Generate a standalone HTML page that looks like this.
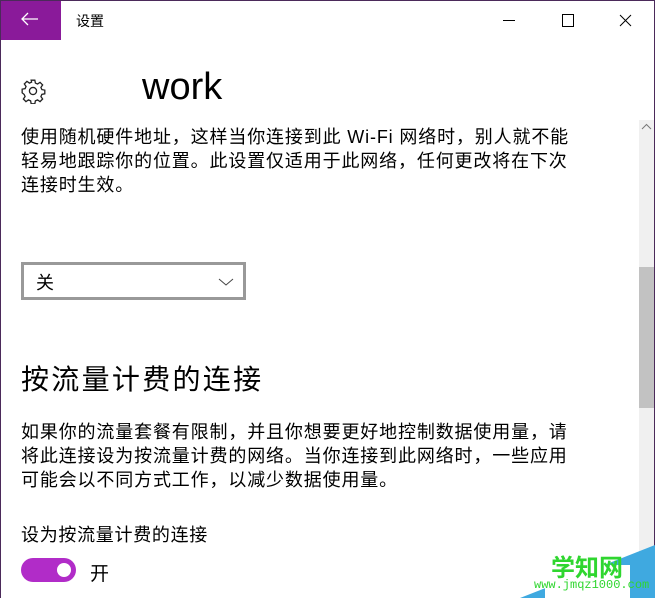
<!DOCTYPE html>
<html><head><meta charset="utf-8"><style>
body{margin:0;width:655px;height:598px;overflow:hidden;background:#fff;font-family:"Liberation Sans","Noto Sans CJK SC",sans-serif;color:#000;position:relative}
.win{position:absolute;left:0;top:0;width:653px;height:597px;border:1px solid #4b2a5a;border-bottom:none}
.abs{position:absolute;white-space:nowrap}
.p{font-size:18px;line-height:24px;letter-spacing:0.85px}
</style></head><body>
<div class="win"></div>
<div class="abs" style="left:1px;top:1px;width:60px;height:39px;background:#8a1a9a"></div>
<svg class="abs" style="left:20px;top:11px" width="20" height="16"><path d="M2 8H18M8 2L2 8L8 14" stroke="#fff" stroke-width="1.3" fill="none"/></svg>
<div class="abs" style="left:76px;top:11px;font-size:14px">设置</div>
<svg class="abs" style="left:0;top:0" width="655" height="40"><path d="M503 20.5H515" stroke="#000"/><rect x="562.5" y="14.5" width="11" height="12" fill="none" stroke="#000"/><path d="M620 15L631 26M631 15L620 26" stroke="#000"/></svg>
<svg class="abs" style="left:20px;top:78px" width="26" height="26" viewBox="0 0 24 24"><path fill="none" stroke="#222" stroke-width="1.2" d="M10.3 2h3.4l.5 2.7 2 .9 2.3-1.6 2.4 2.4-1.6 2.3.9 2 2.7.5v3.4l-2.7.5-.9 2 1.6 2.3-2.4 2.4-2.3-1.6-2 .9-.5 2.7h-3.4l-.5-2.7-2-.9-2.3 1.6-2.4-2.4 1.6-2.3-.9-2L2 13.7v-3.4l2.7-.5.9-2L4 5.5 6.4 3.1l2.3 1.6 2-.9z"/><circle cx="12" cy="12" r="3.3" fill="none" stroke="#222" stroke-width="1.2"/></svg>
<div class="abs" style="left:142px;top:66px;font-size:38px">work</div>
<div class="abs p" style="left:21px;top:125px">使用随机硬件地址，这样当你连接到此 Wi-Fi 网络时，别人就不能<br>轻易地跟踪你的位置。此设置仅适用于此网络，任何更改将在下次<br>连接时生效。</div>
<div class="abs" style="left:21px;top:262px;width:225px;height:38px;border:3px solid #999;box-sizing:border-box"></div>
<div class="abs" style="left:36px;top:269px;font-size:18px">关</div>
<svg class="abs" style="left:218px;top:277px" width="16" height="10"><path d="M1 2L8 8L15 2" stroke="#444" fill="none"/></svg>
<div class="abs" style="left:21px;top:358px;font-size:28px;letter-spacing:2.3px">按流量计费的连接</div>
<div class="abs p" style="left:21px;top:420px">如果你的流量套餐有限制，并且你想要更好地控制数据使用量，请<br>将此连接设为按流量计费的网络。当你连接到此网络时，一些应用<br>可能会以不同方式工作，以减少数据使用量。</div>
<div class="abs" style="left:21px;top:521px;font-size:18px;letter-spacing:0.7px">设为按流量计费的连接</div>
<div class="abs" style="left:21px;top:558px;width:55px;height:24px;border-radius:12px;background:#b12cc8"></div>
<div class="abs" style="left:57px;top:563px;width:14px;height:14px;border-radius:7px;background:#fff"></div>
<div class="abs" style="left:90px;top:559px;font-size:19px">开</div>
<div class="abs" style="left:639px;top:120px;width:15px;height:478px;background:#f0f0f0"></div>
<svg class="abs" style="left:641px;top:123px" width="11" height="8"><path d="M1 6L5.5 1.5L10 6" stroke="#777" fill="none"/></svg>
<div class="abs" style="left:639px;top:267px;width:15px;height:141px;background:#c2c2c2"></div>
<svg class="abs" style="left:500px;top:540px" width="155" height="58"><polygon points="155,5 155,58 20,58" fill="#3fa9e0"/><rect x="45" y="25" width="85" height="33" fill="#fff"/></svg>
<div class="abs" style="left:551px;top:548px;font-size:24px;font-weight:bold;color:#2fd62f">学知网</div>
<div class="abs" style="left:534px;top:578px;font-size:12px;color:#2fd62f;font-family:'Liberation Mono',monospace">www.jmqz1000.com</div>
</body></html>
